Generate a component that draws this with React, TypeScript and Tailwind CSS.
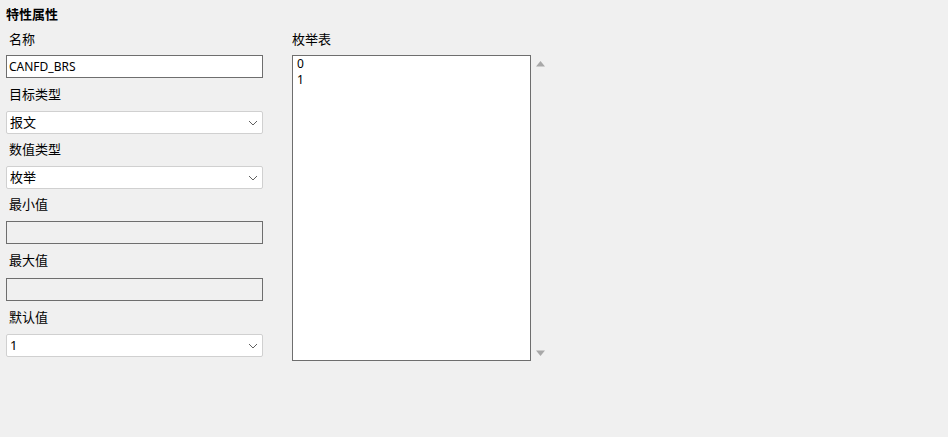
const font = { fontFamily: '"Noto Sans", "Noto Sans CJK SC", sans-serif' };

const Label = ({ text, h }: { text: string; h: string }) => (
  <div className={`${h} flex items-center pl-[3px] text-[13px] text-black`}>{text}</div>
);

const TextBox = ({ value, disabled }: { value?: string; disabled?: boolean }) => (
  <div
    className={`h-[23px] border border-[#6e6e6e] flex items-center pl-[2px] text-[12px] text-black ${
      disabled ? "bg-[#f0f0f0]" : "bg-white"
    }`}
  >
    {value}
  </div>
);

const Chevron = () => (
  <svg width="10" height="6" viewBox="0 0 10 6" className="shrink-0">
    <path d="M1 1 L5 5 L9 1" fill="none" stroke="#606060" strokeWidth="1" />
  </svg>
);

const Select = ({ value }: { value: string }) => (
  <div className="h-[23px] bg-white border border-[#d0d0d0] rounded-[2px] flex items-center justify-between pl-[3px] pr-[4px] text-[13px] text-black">
    <span>{value}</span>
    <Chevron />
  </div>
);

export default function App() {
  return (
    <div className="w-[948px] h-[437px] bg-[#f0f0f0] overflow-hidden" style={font}>
      <div className="h-[24px] pl-[6px] pt-[4px] text-[13px] font-bold leading-[20px] text-black">特性属性</div>
      <div className="flex">
        <div className="w-[257px] ml-[6px] flex flex-col">
          <Label text="名称" h="h-[31px]" />
          <TextBox value="CANFD_BRS" />
          <Label text="目标类型" h="h-[33px]" />
          <Select value="报文" />
          <Label text="数值类型" h="h-[32px]" />
          <Select value="枚举" />
          <Label text="最小值" h="h-[32px]" />
          <TextBox disabled />
          <Label text="最大值" h="h-[34px]" />
          <TextBox disabled />
          <Label text="默认值" h="h-[33px]" />
          <Select value="1" />
        </div>
        <div className="ml-[29px] flex flex-col">
          <div className="h-[31px] flex items-center text-[13px] text-black">枚举表</div>
          <div className="flex">
            <div className="w-[239px] h-[306px] bg-white border border-[#6e6e6e] pl-[4px] text-[12px] leading-[16px] text-black">
              <div>0</div>
              <div>1</div>
            </div>
            <div className="ml-[4px] w-[11px] flex flex-col justify-between pt-[5px] pb-[4px]">
              <svg width="11" height="7" viewBox="0 0 11 7">
                <path d="M1 6.5 L5.5 1 L10 6.5 Z" fill="#a8a8a8" />
              </svg>
              <svg width="11" height="7" viewBox="0 0 11 7">
                <path d="M1 0.5 L5.5 6 L10 0.5 Z" fill="#a8a8a8" />
              </svg>
            </div>
          </div>
        </div>
      </div>
    </div>
  );
}
